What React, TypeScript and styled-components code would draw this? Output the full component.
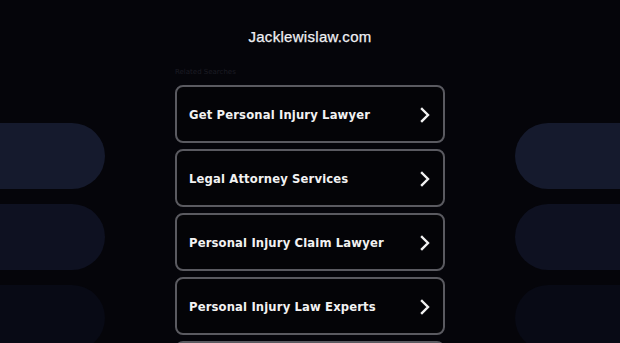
import styled, { createGlobalStyle } from 'styled-components';

const items = [
  'Get Personal Injury Lawyer',
  'Legal Attorney Services',
  'Personal Injury Claim Lawyer',
  'Personal Injury Law Experts',
  'Injury Attorney Near Me',
];

const pillShades = ['#151a2d', '#0e1121', '#080a15'];

const GlobalStyle = createGlobalStyle`
  html, body {
    margin: 0;
    padding: 0;
    background: #05050a;
    overflow: hidden;
  }
`;

const Page = styled.div`
  width: 620px;
  height: 343px;
  overflow: hidden;
  display: flex;
  flex-direction: column;
  align-items: center;
  background: #05050a;
`;

const Title = styled.h1`
  margin: 0;
  padding-top: 28px;
  height: 18px;
  font-family: 'Liberation Sans', Arial, sans-serif;
  font-size: 15px;
  font-weight: 400;
  letter-spacing: 0.3px;
  color: #f0f0f4;
  -webkit-text-stroke: 0.25px #f0f0f4;
`;

const Body = styled.div`
  width: 620px;
  display: grid;
  grid-template-columns: 105px 1fr 105px;
  margin-top: 22px;
`;

const Side = styled.div<{ $right?: boolean }>`
  display: flex;
  flex-direction: column;
  gap: 15px;
  padding-top: 56px;
  align-items: ${(p) => (p.$right ? 'flex-end' : 'flex-start')};
`;

const Pill = styled.div<{ $shade: string; $right?: boolean }>`
  width: 105px;
  height: 66px;
  flex-shrink: 0;
  background: ${(p) => p.$shade};
  border-radius: ${(p) => (p.$right ? '33px 0 0 33px' : '0 33px 33px 0')};
`;

const Center = styled.div`
  display: flex;
  flex-direction: column;
  align-items: center;
`;

const Label = styled.div`
  width: 270px;
  height: 18px;
  font-family: 'DejaVu Sans', sans-serif;
  font-size: 7px;
  color: #1c1c24;
  line-height: 11px;
`;

const List = styled.div`
  display: flex;
  flex-direction: column;
  gap: 6px;
`;

const Card = styled.a`
  box-sizing: border-box;
  width: 270px;
  height: 58px;
  flex-shrink: 0;
  display: flex;
  align-items: center;
  justify-content: space-between;
  padding: 1px 12px 0 12px;
  border: 2px solid #5a5a60;
  border-radius: 8px;
  background: #040407;
  color: #f2f2f2;
  text-decoration: none;
  font-family: 'DejaVu Sans', Verdana, sans-serif;
  font-weight: 700;
  font-size: 11.6px;
  letter-spacing: 0.15px;
`;

const Chevron = () => (
  <svg width="12" height="16" viewBox="0 0 12 16">
    <path d="M3 2 L9 8 L3 14" fill="none" stroke="#f2f2f2" strokeWidth="2.4" strokeLinecap="square" />
  </svg>
);

export default function App() {
  return (
    <Page>
      <GlobalStyle />
      <Title>Jacklewislaw.com</Title>
      <Body>
        <Side>
          {pillShades.map((s) => (
            <Pill key={s} $shade={s} />
          ))}
        </Side>
        <Center>
          <Label>Related Searches</Label>
          <List>
            {items.map((t) => (
              <Card key={t} href="#">
                <span>{t}</span>
                <Chevron />
              </Card>
            ))}
          </List>
        </Center>
        <Side $right>
          {pillShades.map((s) => (
            <Pill key={s} $shade={s} $right />
          ))}
        </Side>
      </Body>
    </Page>
  );
}
